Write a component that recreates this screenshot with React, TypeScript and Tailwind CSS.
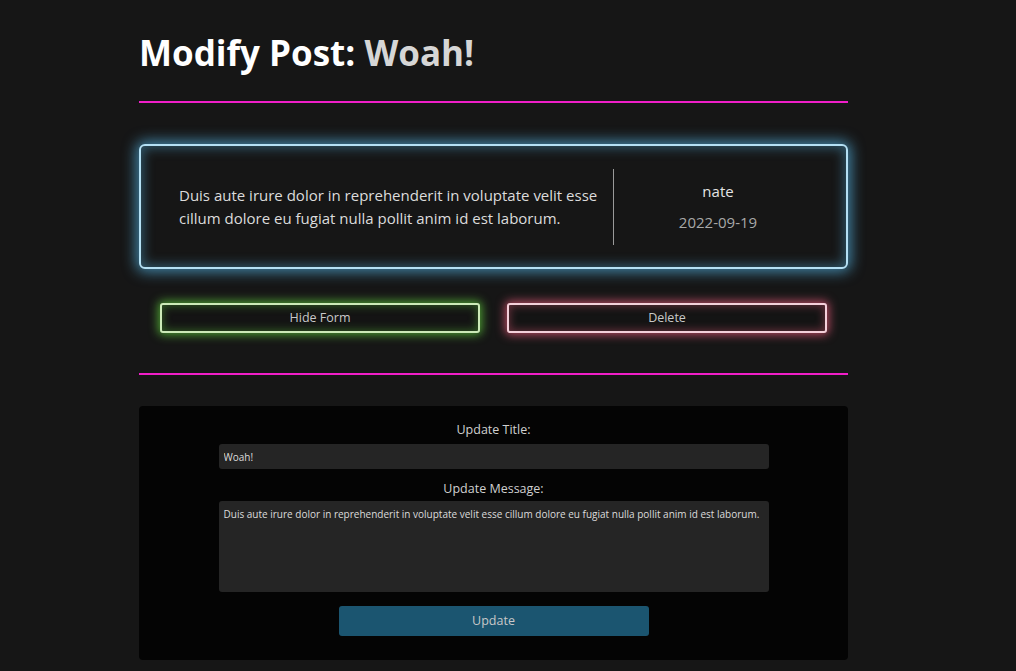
export default function App() {
  return (
    <div className="min-h-[671px] bg-[#161616] font-['Open_Sans',sans-serif] text-[#dcdcdc]">
      <div className="ml-[139px] w-[709px] pt-[30px]">
        <h1 className="text-[35px] font-bold leading-[46px] text-white">
          Modify Post: <span className="text-[#d6d6d6]">Woah!</span>
        </h1>
        <div className="mt-[25px] h-[2px] bg-[#f01ec8]" />

        <div className="mt-[41px] flex h-[125px] items-center rounded-[6px] border-2 border-[#b4e0f4] bg-[#161616] shadow-[0_0_14px_3px_rgba(80,170,215,0.75),inset_0_0_12px_2px_rgba(80,170,215,0.45)]">
          <p className="w-[472px] pl-[38px] text-[15px] leading-[23px] text-[#dcdcdc]">
            Duis aute irure dolor in reprehenderit in voluptate velit esse cillum dolore eu fugiat nulla pollit anim id est laborum.
          </p>
          <div className="h-[76px] w-px bg-[#9a9a9a]" />
          <div className="flex flex-1 flex-col items-center gap-[9px] pr-[24px]">
            <span className="text-[15px] text-[#e4e4e4]">nate</span>
            <span className="text-[15px] text-[#a8a8a8]">2022-09-19</span>
          </div>
        </div>

        <div className="mt-[34px] flex justify-between pl-[21px] pr-[21px]">
          <button className="h-[30px] w-[320px] rounded-[3px] border-2 border-[#cdeab8] bg-[#141414] text-[12.5px] text-[#c8c8c8] shadow-[0_0_10px_2px_rgba(95,200,60,0.75),inset_0_0_8px_1px_rgba(95,200,60,0.4)]">
            Hide Form
          </button>
          <button className="h-[30px] w-[320px] rounded-[3px] border-2 border-[#f4d0da] bg-[#141414] text-[12.5px] text-[#c8c8c8] shadow-[0_0_10px_2px_rgba(230,90,120,0.75),inset_0_0_8px_1px_rgba(230,90,120,0.4)]">
            Delete
          </button>
        </div>

        <div className="mt-[40px] h-[2px] bg-[#f01ec8]" />

        <form className="mt-[31px] flex h-[254px] flex-col items-center rounded-[4px] bg-[#040404] pt-[15px]">
          <label className="text-[12.5px] leading-[18px] text-[#d0d0d0]">Update Title:</label>
          <input
            defaultValue="Woah!"
            className="mt-[5px] h-[25px] w-[550px] rounded-[3px] bg-[#252525] px-[5px] text-[10px] text-[#dcdcdc] outline-none"
          />
          <label className="mt-[11px] text-[12.5px] leading-[18px] text-[#d0d0d0]">Update Message:</label>
          <textarea
            defaultValue="Duis aute irure dolor in reprehenderit in voluptate velit esse cillum dolore eu fugiat nulla pollit anim id est laborum."
            className="mt-[3px] h-[91px] w-[550px] resize-none rounded-[3px] bg-[#252525] px-[5px] pt-[6px] pb-[4px] text-[10px] leading-[14px] text-[#dcdcdc] outline-none"
          />
          <button
            type="button"
            className="mt-[14px] h-[30px] w-[310px] rounded-[3px] bg-[#1b5570] text-[12.5px] text-[#c8c8c8]"
          >
            Update
          </button>
        </form>
      </div>
    </div>
  );
}
